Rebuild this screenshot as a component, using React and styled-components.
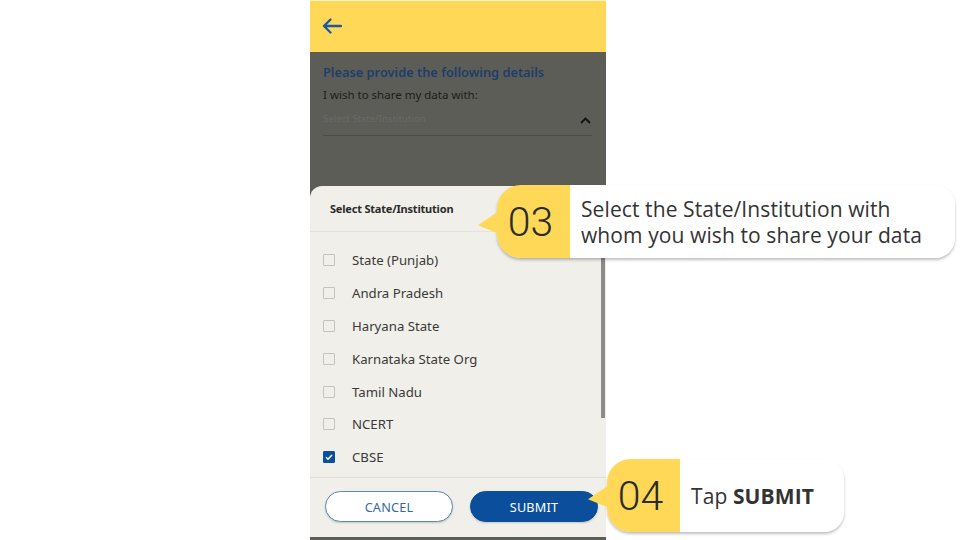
import React from 'react'
import styled, { createGlobalStyle } from 'styled-components'

const institutions = [
    { name: 'State (Punjab)', checked: false },
    { name: 'Andra Pradesh', checked: false },
    { name: 'Haryana State', checked: false },
    { name: 'Karnataka State Org', checked: false },
    { name: 'Tamil Nadu', checked: false },
    { name: 'NCERT', checked: false },
    { name: 'CBSE', checked: true },
]

export default function App() {
    return (
        <>
            <Global />
            <Stage>
                <Phone>
                    <Header>
                        <BackBtn>
                            <svg width="20" height="16" viewBox="0 0 20 16" fill="none">
                                <path d="M19 8H2M8.5 1.5L2 8l6.5 6.5" stroke="#1b5ba3" strokeWidth="2.3" strokeLinecap="round" strokeLinejoin="round" />
                            </svg>
                        </BackBtn>
                    </Header>
                    <Dimmed>
                        <Form>
                            <FormTitle>Please provide the following details</FormTitle>
                            <FormLabel>I wish to share my data with:</FormLabel>
                            <SelectField>
                                <Placeholder>Select State/Institution</Placeholder>
                                <svg width="11" height="7" viewBox="0 0 11 7" fill="none">
                                    <path d="M1 6l4.5-4.5L10 6" stroke="#111" strokeWidth="1.8" />
                                </svg>
                            </SelectField>
                        </Form>
                        <Sheet>
                            <SheetTitle>Select State/Institution</SheetTitle>
                            <List>
                                {institutions.map((item) => (
                                    <Row key={item.name}>
                                        <Check $checked={item.checked}>
                                            {item.checked && (
                                                <svg width="10" height="10" viewBox="0 0 10 10" fill="none">
                                                    <path d="M2 5.2l2 2L8 3" stroke="#fff" strokeWidth="1.5" />
                                                </svg>
                                            )}
                                        </Check>
                                        <RowText>{item.name}</RowText>
                                    </Row>
                                ))}
                            </List>
                            <Footer>
                                <Button>CANCEL</Button>
                                <Button $primary>SUBMIT</Button>
                            </Footer>
                            <ScrollThumb />
                        </Sheet>
                    </Dimmed>
                </Phone>

                <Callout $x={478} $y={185}>
                    <StepNo>03</StepNo>
                    <StepText $width={385}>
                        <Line>Select the State/Institution with</Line>
                        <Line>whom you wish to share your data</Line>
                    </StepText>
                </Callout>
                <Callout $x={588} $y={459}>
                    <StepNo>04</StepNo>
                    <StepText $width={164}>
                        <Line>Tap <b>SUBMIT</b></Line>
                    </StepText>
                </Callout>
            </Stage>
        </>
    )
}

const Global = createGlobalStyle`
    body {
        margin: 0;
        background: #fff;
        font-family: "Noto Sans", "Open Sans", sans-serif;
    }
`;

const Stage = styled.div`
    position: relative;
    width: 960px;
    height: 540px;
    overflow: hidden;
    display: flex;
    padding-left: 310px;
    box-sizing: border-box;
`;

const Phone = styled.div`
    width: 296px;
    height: 540px;
    display: flex;
    flex-direction: column;
`;

const Header = styled.div`
    height: 52px;
    background: #fed856;
    border-top: 1px solid #fff3c8;
    box-sizing: border-box;
    display: flex;
    align-items: center;
    padding-left: 12px;
    flex-shrink: 0;
`;

const BackBtn = styled.div`
    display: flex;
    margin-top: -2px;
`;

const Dimmed = styled.div`
    flex: 1;
    background: #5d5d58;
    display: flex;
    flex-direction: column;
    justify-content: space-between;
    padding-bottom: 3px;
`;

const Form = styled.div`
    padding: 11px 14px 0 13px;
`;

const FormTitle = styled.div`
    font-size: 12.8px;
    font-weight: 600;
    color: #1e3d68;
    line-height: 18px;
`;

const FormLabel = styled.div`
    font-size: 11.5px;
    color: #1c1c1a;
    margin-top: 6px;
    line-height: 16px;
`;

const SelectField = styled.div`
    display: flex;
    justify-content: space-between;
    align-items: center;
    height: 31px;
    border-bottom: 1px solid #4b4b48;
    padding-right: 1px;
    margin-top: 1px;
    svg { margin-top: 1px; }
`;

const Placeholder = styled.span`
    font-size: 9.6px;
    color: #6a6a66;
    margin-top: -3px;
`;

const Sheet = styled.div`
    position: relative;
    height: 351px;
    background: #f0efe9;
    border-radius: 12px 12px 0 0;
    display: flex;
    flex-direction: column;
`;

const SheetTitle = styled.div`
    height: 46px;
    box-sizing: border-box;
    border-bottom: 1px solid #e3e2db;
    padding-left: 20px;
    display: flex;
    align-items: center;
    font-size: 11px;
    font-weight: 700;
    color: #2b2b2b;
    letter-spacing: -0.2px;
`;

const List = styled.div`
    padding: 12px 0 0 13px;
    flex: 1;
`;

const Row = styled.div`
    height: 32.8px;
    display: flex;
    align-items: center;
    gap: 17px;
`;

const Check = styled.span`
    width: 12px;
    height: 12px;
    box-sizing: border-box;
    border: 1px solid ${(p) => (p.$checked ? '#0b4f9c' : '#c4c3bd')};
    background: ${(p) => (p.$checked ? '#0b4f9c' : 'transparent')};
    border-radius: 1px;
    display: flex;
    align-items: center;
    justify-content: center;
`;

const RowText = styled.span`
    font-size: 13.2px;
    color: #3a3a3a;
`;

const Footer = styled.div`
    height: 60px;
    box-sizing: border-box;
    border-top: 1px solid #e0dfd8;
    display: flex;
    align-items: center;
    gap: 17px;
    padding: 0 8px 2px 15px;
`;

const Button = styled.button`
    width: 128px;
    height: 31px;
    border-radius: 16px;
    font-family: "Noto Sans", "Open Sans", sans-serif;
    font-size: 12.7px;
    letter-spacing: 0.2px;
    border: 1px solid ${(p) => (p.$primary ? '#0b4f9c' : '#5d88be')};
    background: ${(p) => (p.$primary ? '#0b4f9c' : '#fff')};
    color: ${(p) => (p.$primary ? '#fff' : '#3469a8')};
    box-shadow: 0 1px 2px rgba(0, 0, 0, 0.18);
`;

const ScrollThumb = styled.div`
    position: absolute;
    right: 1px;
    top: 72px;
    width: 4px;
    height: 160px;
    background: #8b8b89;
`;

const Callout = styled.div`
    position: absolute;
    left: ${(p) => p.$x + 19}px;
    top: ${(p) => p.$y}px;
    height: 73px;
    display: flex;
    border-radius: 24px 20px 20px 24px;
    box-shadow: 0 2px 3px rgba(0, 0, 0, 0.25);
    &::before {
        content: '';
        position: absolute;
        left: -19px;
        top: 50%;
        margin-top: -13px;
        border-right: 24px solid #fed856;
        border-top: 13px solid transparent;
        border-bottom: 13px solid transparent;
        transform-origin: right center;
        transform: skewY(-8deg);
    }
`;

const StepNo = styled.div`
    width: 73px;
    background: #fed856;
    border-radius: 24px 0 0 24px;
    display: flex;
    align-items: center;
    justify-content: center;
    font-family: Roboto, "Liberation Sans", sans-serif;
    font-weight: 300;
    font-size: 41px;
    color: #2b2b2b;
    padding-right: 6px;
    box-sizing: border-box;
`;

const StepText = styled.div`
    width: ${(p) => p.$width}px;
    box-sizing: border-box;
    background: #fff;
    border-radius: 0 20px 20px 0;
    display: flex;
    flex-direction: column;
    justify-content: center;
    padding-left: 11px;
    font-family: "Open Sans", "Noto Sans", sans-serif;
    font-size: 21px;
    color: #333;
    white-space: nowrap;
    b { font-weight: 700; }
`;

const Line = styled.div`
    height: 26px;
    line-height: 26px;
    letter-spacing: 0.1px;
`;
